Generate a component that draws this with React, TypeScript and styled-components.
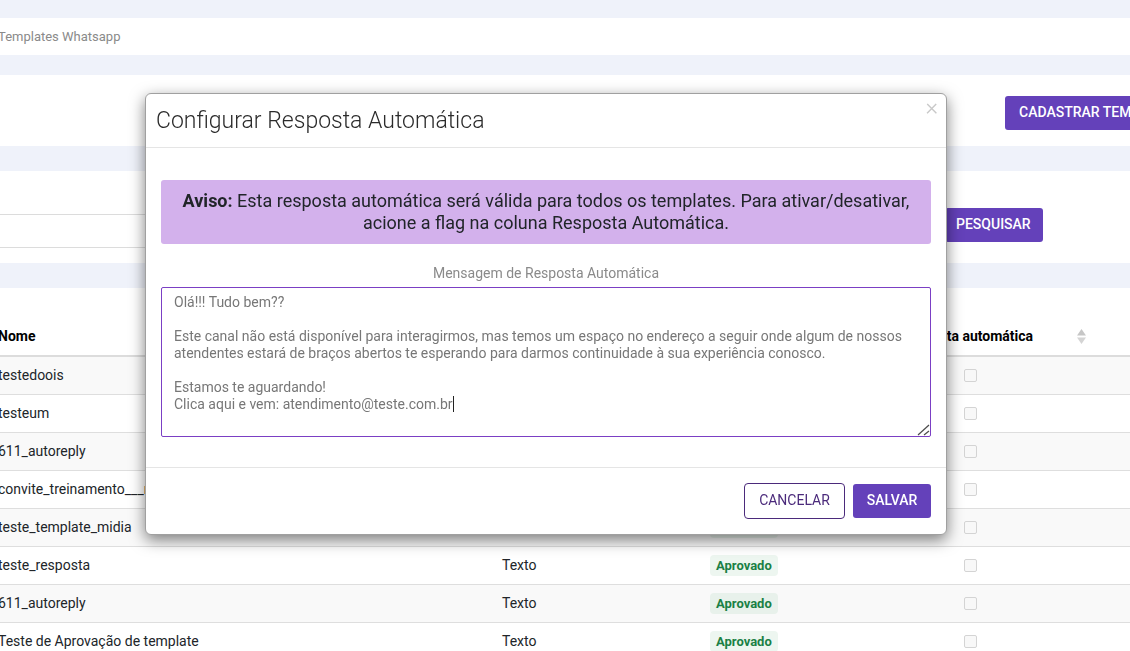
import { FC } from "react";
import styled, { createGlobalStyle } from "styled-components";

interface TemplateRow {
  name: string;
}

const rows: TemplateRow[] = [
  { name: "testedoois" },
  { name: "testeum" },
  { name: "611_autoreply" },
  { name: "convite_treinamento___reuniao" },
  { name: "teste_template_midia" },
  { name: "teste_resposta" },
  { name: "611_autoreply" },
  { name: "Teste de Aprovação de template" },
];

const message = `Olá!!! Tudo bem??

Este canal não está disponível para interagirmos, mas temos um espaço no endereço a seguir onde algum de nossos atendentes estará de braços abertos te esperando para darmos continuidade à sua experiência conosco.

Estamos te aguardando!
Clica aqui e vem: atendimento@teste.com.br`;

const GlobalStyle = createGlobalStyle`
  html, body {
    margin: 0;
    height: 100%;
    overflow: hidden;
    background: #fff;
    font-family: Roboto, "Liberation Sans", sans-serif;
  }
`;

const SortIcon: FC = () => (
  <svg width="9" height="15" viewBox="0 0 9 15">
    <path d="M4.5 0 L9 6.5 H0 Z" fill="#c6c6c6" />
    <path d="M4.5 15 L9 8.5 H0 Z" fill="#d4d4d4" />
  </svg>
);

const ResizeGrip: FC = () => (
  <Grip width="13" height="13" viewBox="0 0 13 13">
    <path d="M1 12 L12 2" stroke="#4a4a4a" strokeWidth="1.2" />
    <path d="M7 12 L12 8" stroke="#4a4a4a" strokeWidth="1.2" />
  </Grip>
);

const App: FC = () => {
  return (
    <Page>
      <GlobalStyle />
      <Band $height={18} />
      <Breadcrumb>Templates Whatsapp</Breadcrumb>
      <Band $height={20} />
      <ActionBar>
        <PrimaryButton $left={14}>CADASTRAR TEMPLATE</PrimaryButton>
      </ActionBar>
      <Band $height={25} />
      <SearchBar>
        <SearchInput />
        <PrimaryButton $left={11}>PESQUISAR</PrimaryButton>
      </SearchBar>
      <Band $height={25} />
      <HeadRow>
        <HeadCell>
          Nome
          <SortIcon />
        </HeadCell>
        <HeadCell>
          Tipo
          <SortIcon />
        </HeadCell>
        <HeadCell>
          Status
          <SortIcon />
        </HeadCell>
        <HeadCell>
          Resposta automática
          <SortIcon />
        </HeadCell>
      </HeadRow>
      {rows.map((row, k) => (
        <Row key={k} $striped={k % 2 === 0}>
          <TextCell>{row.name}</TextCell>
          <TextCell>Texto</TextCell>
          <Cell>
            <Badge $striped={k % 2 === 0}>Aprovado</Badge>
          </Cell>
          <Cell>
            <FlagBox />
          </Cell>
        </Row>
      ))}

      <Modal>
        <ModalHeader>
          <ModalTitle>Configurar Resposta Automática</ModalTitle>
          <CloseButton>×</CloseButton>
        </ModalHeader>
        <ModalBody>
          <Notice>
            <strong>Aviso:</strong> Esta resposta automática será válida para todos os
            templates. Para ativar/desativar, acione a flag na coluna Resposta Automática.
          </Notice>
          <FieldLabel>Mensagem de Resposta Automática</FieldLabel>
          <MessageField>
            <MessageInput defaultValue={message} spellCheck={false} />
            <Caret />
            <ResizeGrip />
          </MessageField>
        </ModalBody>
        <ModalFooter>
          <OutlineButton>CANCELAR</OutlineButton>
          <SaveButton>SALVAR</SaveButton>
        </ModalFooter>
      </Modal>
    </Page>
  );
};

const Page = styled.div`
  width: 1130px;
  height: 651px;
  overflow: hidden;
  color: #212529;
  font-size: 14px;
`;

const Band = styled.div<{ $height: number }>`
  height: ${({ $height }) => $height}px;
  background: #eff2fa;
`;

const Breadcrumb = styled.div`
  height: 37px;
  line-height: 37px;
  margin-left: -2px;
  font-size: 13px;
  color: #8a8a8a;
`;

const ActionBar = styled.div`
  height: 71px;
  padding: 21px 0 0 1005px;
  box-sizing: border-box;
  display: flex;
  overflow: hidden;
`;

const PrimaryButton = styled.button<{ $left: number }>`
  flex: none;
  height: 34px;
  padding: 0 12px 2px ${({ $left }) => $left}px;
  border: 0;
  border-radius: 3px;
  background: #6441ba;
  color: #fff;
  font: 500 14px Roboto, sans-serif;
  white-space: nowrap;
`;

const SearchBar = styled.div`
  height: 92px;
  padding-top: 37px;
  box-sizing: border-box;
  display: flex;
  align-items: flex-start;
`;

const SearchInput = styled.div`
  width: 945px;
  height: 34px;
  margin-top: 6px;
  box-sizing: border-box;
  border-top: 1px solid #dcdcdc;
  border-bottom: 1px solid #dcdcdc;
`;

const gridColumns = "504px 208px 190px 188px";

const HeadRow = styled.div`
  display: grid;
  grid-template-columns: ${gridColumns};
  height: 69px;
  margin-left: -2px;
  width: 1132px;
  box-sizing: border-box;
  border-bottom: 2px solid #dcdcdc;
`;

const HeadCell = styled.div`
  display: flex;
  align-items: center;
  justify-content: space-between;
  padding: 29px 2px 0 0;
  box-sizing: border-box;
  font-weight: 700;
  font-size: 14px;
  color: #000;
`;

const Row = styled.div<{ $striped: boolean }>`
  display: grid;
  grid-template-columns: ${gridColumns};
  height: 38px;
  width: 1132px;
  margin-left: -2px;
  box-sizing: border-box;
  border-bottom: 1px solid #dedede;
  background: ${({ $striped }) => ($striped ? "#f9f9f9" : "#fff")};
`;

const Cell = styled.div`
  display: flex;
  align-items: center;
  white-space: nowrap;
  font-size: 14px;
  color: #212529;
`;

const TextCell = styled(Cell)`
  padding-bottom: 2px;
`;

const Badge = styled.span<{ $striped: boolean }>`
  padding: 3px 6px;
  border-radius: 4px;
  background: ${({ $striped }) => ($striped ? "#e8f1eb" : "#edf6f0")};
  color: #1a8045;
  font-size: 13px;
  font-weight: 700;
  line-height: 15px;
`;

const FlagBox = styled.span`
  width: 13px;
  height: 13px;
  margin-left: 64px;
  box-sizing: border-box;
  border: 1px solid #d4d4d4;
  border-radius: 2px;
  background: #f8f8f8;
`;

const Modal = styled.div`
  position: fixed;
  left: 145px;
  top: 93px;
  width: 802px;
  height: 442px;
  display: flex;
  flex-direction: column;
  box-sizing: border-box;
  background: #fff;
  border: 1px solid #a0a0a0;
  border-radius: 6px;
  box-shadow: 0 5px 15px rgba(0, 0, 0, 0.5);
`;

const ModalHeader = styled.div`
  position: relative;
  height: 54px;
  padding: 0 0 0 10px;
  display: flex;
  align-items: center;
  box-sizing: border-box;
  border-bottom: 1px solid #e5e5e5;
`;

const ModalTitle = styled.h4`
  margin: 0;
  font-size: 23px;
  font-weight: 300;
  color: #2b2b2b;
`;

const CloseButton = styled.span`
  position: absolute;
  top: 1px;
  right: 8px;
  font-size: 24px;
  font-weight: 300;
  line-height: 24px;
  color: #c9c9c9;
`;

const ModalBody = styled.div`
  flex: 1;
  padding: 32px 15px 0;
  display: flex;
  flex-direction: column;
`;

const Notice = styled.div`
  height: 64px;
  padding: 10px 16px;
  box-sizing: border-box;
  border-radius: 3px;
  background: #d3b1ec;
  color: #212529;
  font-size: 18px;
  line-height: 22px;
  text-align: center;
`;

const FieldLabel = styled.div`
  margin-top: 20px;
  height: 23px;
  line-height: 19px;
  text-align: center;
  font-size: 14px;
  color: #8a8a8a;
`;

const MessageField = styled.div`
  position: relative;
  height: 150px;
`;

const MessageInput = styled.textarea`
  display: block;
  width: 100%;
  height: 100%;
  box-sizing: border-box;
  padding: 6px 12px;
  border: 1px solid #7b3fc4;
  border-radius: 2px;
  outline: none;
  resize: none;
  font: 400 14px/17px Roboto, sans-serif;
  color: #777;
  background: #fff;
`;

const Caret = styled.span`
  position: absolute;
  left: 292px;
  top: 109px;
  width: 1px;
  height: 16px;
  background: #222;
`;

const Grip = styled.svg`
  position: absolute;
  right: 1px;
  bottom: 1px;
`;

const ModalFooter = styled.div`
  height: 67px;
  box-sizing: border-box;
  border-top: 1px solid #e5e5e5;
  padding: 15px 15px 0;
  display: flex;
  justify-content: flex-end;
  align-items: flex-start;
  gap: 8px;
`;

const OutlineButton = styled.button`
  width: 101px;
  height: 36px;
  padding: 0 0 2px;
  border: 1px solid #4b2a7b;
  border-radius: 4px;
  background: #fff;
  color: #4b2a7b;
  font: 400 14px Roboto, sans-serif;
`;

const SaveButton = styled.button`
  width: 78px;
  height: 34px;
  margin-top: 1px;
  padding: 0 0 2px;
  border: 0;
  border-radius: 3px;
  background: #6441ba;
  color: #fff;
  font: 500 14px Roboto, sans-serif;
`;

export default App;
